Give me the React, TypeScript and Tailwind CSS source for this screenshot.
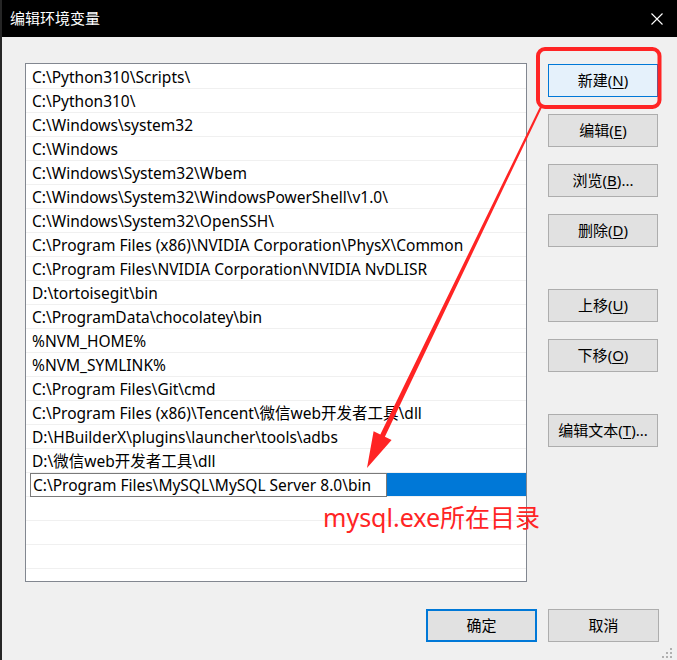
import React from "react";

const rows = [
  "C:\\Python310\\Scripts\\",
  "C:\\Python310\\",
  "C:\\Windows\\system32",
  "C:\\Windows",
  "C:\\Windows\\System32\\Wbem",
  "C:\\Windows\\System32\\WindowsPowerShell\\v1.0\\",
  "C:\\Windows\\System32\\OpenSSH\\",
  "C:\\Program Files (x86)\\NVIDIA Corporation\\PhysX\\Common",
  "C:\\Program Files\\NVIDIA Corporation\\NVIDIA NvDLISR",
  "D:\\tortoisegit\\bin",
  "C:\\ProgramData\\chocolatey\\bin",
  "%NVM_HOME%",
  "%NVM_SYMLINK%",
  "C:\\Program Files\\Git\\cmd",
  "C:\\Program Files (x86)\\Tencent\\微信web开发者工具\\dll",
  "D:\\HBuilderX\\plugins\\launcher\\tools\\adbs",
  "D:\\微信web开发者工具\\dll",
];

const font = "font-['Noto_Sans','Noto_Sans_CJK_SC',sans-serif]";

function Btn({
  label,
  mn,
  suffix = "",
  primary = false,
}: {
  label: string;
  mn: string;
  suffix?: string;
  primary?: boolean;
}) {
  return (
    <div
      className={
        "w-[110px] h-[33px] flex items-center justify-center text-[15px] text-black border " +
        (primary ? "border-[#0078d7] bg-[#e5f1fb]" : "border-[#adadad] bg-[#e1e1e1]")
      }
    >
      <span>
        {label}(<span className="underline underline-offset-2">{mn}</span>){suffix}
      </span>
    </div>
  );
}

export default function App() {
  return (
    <div
      className={
        "relative w-[677px] h-[660px] bg-[#f0f0f0] overflow-hidden border-l-2 border-[#262626] " +
        font
      }
    >
      {/* title bar */}
      <div className="h-[37px] bg-black flex items-center justify-between pl-[8px] pr-[14px]">
        <span className="text-white text-[15px] leading-none">编辑环境变量</span>
        <svg width="12" height="12" viewBox="0 0 12 12">
          <path d="M0.5 0.5 L11.5 11.5 M11.5 0.5 L0.5 11.5" stroke="#fff" strokeWidth="1.1" fill="none" />
        </svg>
      </div>

      {/* body */}
      <div className="flex pl-[23px] pt-[26px]">
        <div className="w-[502px] h-[519px] border border-[#828790] bg-white pt-[1px] overflow-hidden">
          {rows.map((r, i) => (
            <div
              key={i}
              className="h-[24px] border-b border-[#f0f0f0] pl-[6px] text-[15.5px] leading-[24px] text-black whitespace-nowrap"
            >
              {r}
            </div>
          ))}
          <div className="h-[24px] border-b border-[#f0f0f0] flex">
            <div className="ml-[4px] w-[357px] h-[24px] border border-[#7a7a7a] bg-white pl-[2px] text-[15.5px] leading-[22px] text-black whitespace-nowrap">
              C:\Program Files\MySQL\MySQL Server 8.0\bin
            </div>
            <div className="flex-1 bg-[#0078d7]" />
          </div>
          {[0, 1, 2, 3].map((i) => (
            <div key={i} className="h-[24px] border-b border-[#f0f0f0]" />
          ))}
        </div>

        <div className="ml-[21px] pt-[1px] flex flex-col">
          <div className="flex flex-col gap-[17px]">
            <Btn label="新建" mn="N" primary />
            <Btn label="编辑" mn="E" />
            <Btn label="浏览" mn="B" suffix="..." />
            <Btn label="删除" mn="D" />
          </div>
          <div className="mt-[42px] flex flex-col gap-[17px]">
            <Btn label="上移" mn="U" />
            <Btn label="下移" mn="O" />
          </div>
          <div className="mt-[42px]">
            <Btn label="编辑文本" mn="T" suffix="..." />
          </div>
        </div>
      </div>

      {/* bottom buttons */}
      <div className="flex justify-end gap-[11px] pr-[18px] mt-[27px]">
        <div className="w-[111px] h-[33px] flex items-center justify-center text-[15px] text-black border-2 border-[#0078d7] bg-[#e1e1e1]">
          确定
        </div>
        <div className="w-[111px] h-[33px] flex items-center justify-center text-[15px] text-black border border-[#adadad] bg-[#e1e1e1]">
          取消
        </div>
      </div>

      {/* annotation overlay */}
      <svg
        className="absolute left-[-2px] top-0 pointer-events-none"
        width="677"
        height="660"
        viewBox="0 0 677 660"
      >
        <rect x="538" y="49" width="121.5" height="58" rx="7" fill="none" stroke="#ff2424" strokeWidth="4" />
        <polygon
          points="541.9,107.4 384.9,436.7 391.6,440 367,468 373.6,431.3 380.3,434.5 540.1,106.6"
          fill="#ff2424"
        />
        <g fill="#b0b0b0">
          <rect x="670" y="648" width="2" height="2" />
          <rect x="666" y="652" width="2" height="2" />
          <rect x="670" y="652" width="2" height="2" />
          <rect x="662" y="656" width="2" height="2" />
          <rect x="666" y="656" width="2" height="2" />
          <rect x="670" y="656" width="2" height="2" />
        </g>
      </svg>
      <div className="absolute left-[321px] top-[502px] text-[25px] leading-[30px] text-[#ff2424] whitespace-nowrap">
        mysql.exe所在目录
      </div>
    </div>
  );
}
